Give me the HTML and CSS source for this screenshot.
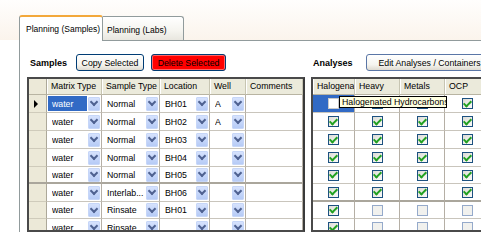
FILE: index.html
```html
<!DOCTYPE html>
<html>
<head>
<meta charset="utf-8">
<link rel="stylesheet" href="styles.css">
</head>
<body>
<div class="app">
  <div class="tabstrip">
    <div class="tab active">Planning (Samples)</div>
    <div class="tab">Planning (Labs)</div>
  </div>
  <div class="panel">
    <section class="pane samples">
      <div class="toolbar">
        <span class="label">Samples</span>
        <button class="btn btn-copy">Copy Selected</button>
        <button class="btn btn-delete">Delete Selected</button>
      </div>
      <div class="grid grid-samples">
        <div class="row head">
          <div class="rh"></div>
          <div class="h">Matrix Type</div>
          <div class="h">Sample Type</div>
          <div class="h">Location</div>
          <div class="h">Well</div>
          <div class="h">Comments</div>
        </div>
        <div class="row">
          <div class="rh cur"></div>
          <div class="c combo sel"><span class="v">water</span><span class="dd"></span></div>
          <div class="c combo"><span class="v">Normal</span><span class="dd"></span></div>
          <div class="c combo"><span class="v">BH01</span><span class="dd"></span></div>
          <div class="c combo"><span class="v">A</span><span class="dd"></span></div>
          <div class="c"></div>
        </div>
        <div class="row">
          <div class="rh"></div>
          <div class="c combo"><span class="v">water</span><span class="dd"></span></div>
          <div class="c combo"><span class="v">Normal</span><span class="dd"></span></div>
          <div class="c combo"><span class="v">BH02</span><span class="dd"></span></div>
          <div class="c combo"><span class="v">A</span><span class="dd"></span></div>
          <div class="c"></div>
        </div>
        <div class="row">
          <div class="rh"></div>
          <div class="c combo"><span class="v">water</span><span class="dd"></span></div>
          <div class="c combo"><span class="v">Normal</span><span class="dd"></span></div>
          <div class="c combo"><span class="v">BH03</span><span class="dd"></span></div>
          <div class="c combo"><span class="v"></span><span class="dd"></span></div>
          <div class="c"></div>
        </div>
        <div class="row">
          <div class="rh"></div>
          <div class="c combo"><span class="v">water</span><span class="dd"></span></div>
          <div class="c combo"><span class="v">Normal</span><span class="dd"></span></div>
          <div class="c combo"><span class="v">BH04</span><span class="dd"></span></div>
          <div class="c combo"><span class="v"></span><span class="dd"></span></div>
          <div class="c"></div>
        </div>
        <div class="row short thick">
          <div class="rh"></div>
          <div class="c combo"><span class="v">water</span><span class="dd"></span></div>
          <div class="c combo"><span class="v">Normal</span><span class="dd"></span></div>
          <div class="c combo"><span class="v">BH05</span><span class="dd"></span></div>
          <div class="c combo"><span class="v"></span><span class="dd"></span></div>
          <div class="c"></div>
        </div>
        <div class="row">
          <div class="rh"></div>
          <div class="c combo"><span class="v">water</span><span class="dd"></span></div>
          <div class="c combo"><span class="v">Interlab...</span><span class="dd"></span></div>
          <div class="c combo"><span class="v">BH06</span><span class="dd"></span></div>
          <div class="c combo"><span class="v"></span><span class="dd"></span></div>
          <div class="c"></div>
        </div>
        <div class="row short">
          <div class="rh"></div>
          <div class="c combo"><span class="v">water</span><span class="dd"></span></div>
          <div class="c combo"><span class="v">Rinsate</span><span class="dd"></span></div>
          <div class="c combo"><span class="v">BH01</span><span class="dd"></span></div>
          <div class="c combo"><span class="v"></span><span class="dd"></span></div>
          <div class="c"></div>
        </div>
        <div class="row">
          <div class="rh"></div>
          <div class="c combo"><span class="v">water</span><span class="dd"></span></div>
          <div class="c combo"><span class="v">Rinsate</span><span class="dd"></span></div>
          <div class="c combo"><span class="v"></span><span class="dd"></span></div>
          <div class="c combo"><span class="v"></span><span class="dd"></span></div>
          <div class="c"></div>
        </div>
      </div>
    </section>
    <section class="pane analyses">
      <div class="toolbar">
        <span class="label">Analyses</span>
        <button class="btn btn-edit">Edit Analyses / Containers</button>
      </div>
      <div class="grid grid-analyses">
        <div class="row head">
          <div class="h">Halogenated</div>
          <div class="h">Heavy</div>
          <div class="h">Metals</div>
          <div class="h">OCP</div>
        </div>
        <div class="row">
          <div class="c chk sel"><span class="box"></span></div>
          <div class="c chk"><span class="box on"></span></div>
          <div class="c chk"><span class="box on"></span></div>
          <div class="c chk"><span class="box on"></span></div>
        </div>
        <div class="row">
          <div class="c chk"><span class="box on"></span></div>
          <div class="c chk"><span class="box on"></span></div>
          <div class="c chk"><span class="box on"></span></div>
          <div class="c chk"><span class="box on"></span></div>
        </div>
        <div class="row">
          <div class="c chk"><span class="box on"></span></div>
          <div class="c chk"><span class="box on"></span></div>
          <div class="c chk"><span class="box on"></span></div>
          <div class="c chk"><span class="box on"></span></div>
        </div>
        <div class="row">
          <div class="c chk"><span class="box on"></span></div>
          <div class="c chk"><span class="box on"></span></div>
          <div class="c chk"><span class="box on"></span></div>
          <div class="c chk"><span class="box on"></span></div>
        </div>
        <div class="row short">
          <div class="c chk"><span class="box on"></span></div>
          <div class="c chk"><span class="box on"></span></div>
          <div class="c chk"><span class="box on"></span></div>
          <div class="c chk"><span class="box on"></span></div>
        </div>
        <div class="row thick">
          <div class="c chk"><span class="box on"></span></div>
          <div class="c chk"><span class="box on"></span></div>
          <div class="c chk"><span class="box on"></span></div>
          <div class="c chk"><span class="box on"></span></div>
        </div>
        <div class="row short">
          <div class="c chk"><span class="box on"></span></div>
          <div class="c chk"><span class="box off"></span></div>
          <div class="c chk"><span class="box off"></span></div>
          <div class="c chk"><span class="box off"></span></div>
        </div>
        <div class="row">
          <div class="c chk"><span class="box on"></span></div>
          <div class="c chk"><span class="box off"></span></div>
          <div class="c chk"><span class="box off"></span></div>
          <div class="c chk"><span class="box off"></span></div>
        </div>
        <div class="tooltip">Halogenated Hydrocarbons</div>
      </div>
    </section>
  </div>
</div>
</body>
</html>
```
FILE: styles.css
```css
* { box-sizing: border-box; }

body {
  margin: 0;
  background: #fff;
  font-family: "Liberation Sans", Arial, sans-serif;
  font-size: 8.75px;
  color: #000;
}

.app {
  width: 481px;
  height: 232px;
  overflow: hidden;
  background: linear-gradient(#fffefd, #fbf4ec 40px, #fff 40px);
}

/* tabs */
.tabstrip {
  height: 40px;
  display: flex;
  align-items: flex-end;
  padding-left: 19px;
}

.tab {
  height: 24px;
  width: 81px;
  padding: 7px 0 0 4px;
  line-height: 12px;
  font-size: 8.5px;
  white-space: nowrap;
  border: 1px solid #919b9c;
  border-left: none;
  border-bottom: none;
  border-radius: 0 3px 0 0;
  background: linear-gradient(#fff, #f5f4ef 60%, #e8e6df);
}

.tab.active {
  position: relative;
  z-index: 1;
  height: 26px;
  width: 84px;
  margin-bottom: -1px;
  padding: 6px 0 0 6px;
  border-left: 1px solid #919b9c;
  border-top: 2px solid #f3a83b;
  border-radius: 3px 3px 0 0;
  background: #fff;
}

/* panel */
.panel {
  margin-left: 19px;
  height: 192px;
  display: flex;
  gap: 6px;
  padding: 13px 0 0 7px;
  border-left: 1px solid #919b9c;
  border-top: 1px solid #919b9c;
  background: #fff;
}

.pane {
  display: flex;
  flex-direction: column;
  gap: 6px;
  flex: none;
}

.toolbar {
  height: 17px;
  display: flex;
  align-items: center;
  gap: 7px;
}

.samples .toolbar { padding-left: 3px; }
.analyses .toolbar { padding-left: 2px; gap: 11px; }

.label {
  font-weight: bold;
  font-size: 9px;
  margin-right: 2px;
}

.btn {
  height: 17px;
  padding: 0;
  font: inherit;
  color: #000;
  white-space: nowrap;
  overflow: hidden;
  border: 1px solid #003c74;
  border-radius: 3px;
  background: linear-gradient(#ffffff, #f5f4ef 65%, #dedad0);
}

.btn-copy { width: 68px; }
.btn-delete { width: 75px; background: #ff0000; box-shadow: inset 0 0 0 1px #f66; }
.btn-edit { width: 128px; border-color: #5a76a6; }

/* grids */
.grid {
  position: relative;
  border: 2px solid #4a4a4a;
  border-right-color: #3a3a3a;
  height: 160px;
  overflow: hidden;
}

.grid-samples { width: 278px; }
.grid-analyses { width: 180px; }

.row {
  display: grid;
  height: 18px;
}

.row.head { height: 16px; }
.row.short { height: 17px; }

.grid-samples .row { grid-template-columns: 18px 55px 58px 50px 36px 57px; }
.grid-analyses .row { grid-template-columns: 42px 45px 45px 45px; }

.h {
  background: #ebeadb;
  border-right: 1px solid #c7c5b2;
  border-bottom: 1px solid #b8b4a2;
  box-shadow: inset 1px 0 0 #fff;
  padding-left: 4px;
  line-height: 15px;
  white-space: nowrap;
  overflow: hidden;
}

.rh {
  background: #ece9d8;
  border-right: 1px solid #aca899;
  border-bottom: 1px solid #cfcbbb;
  display: flex;
  align-items: center;
  padding-left: 5px;
}

.head .rh { border-bottom-color: #b8b4a2; }

.rh.cur::before {
  content: "";
  border-left: 4px solid #000;
  border-top: 4px solid transparent;
  border-bottom: 4px solid transparent;
}

.c {
  background: #fff;
  border-right: 1px solid #b5afa5;
  border-bottom: 1px solid #c9c5bc;
  white-space: nowrap;
  overflow: hidden;
}

.thick .c, .thick .rh { border-bottom: 2px solid #aaa69c; }

.combo {
  display: flex;
  align-items: center;
  padding: 0 1px 0 5px;
}

.combo .v {
  flex: 1;
  overflow: hidden;
}

.combo.sel { padding: 1px 1px 1px 1px; }
.combo.sel .v {
  align-self: stretch;
  display: flex;
  align-items: center;
  padding-left: 4px;
  background: #316ac5;
  color: #fff;
  margin-right: 1px;
}

.dd {
  flex: none;
  width: 12px;
  height: 14px;
  display: flex;
  align-items: center;
  justify-content: center;
  border: 1px solid #c6d6f8;
  border-radius: 1px;
  background: linear-gradient(#d6e2fd, #b6cbf6);
}

.dd::after {
  content: "";
  width: 4px;
  height: 4px;
  margin-top: -3px;
  border-right: 2px solid #4f6291;
  border-bottom: 2px solid #4f6291;
  transform: rotate(45deg);
}

.chk {
  display: flex;
  align-items: center;
  justify-content: center;
}

.chk.sel { background: #316ac5; }

.box {
  width: 11px;
  height: 11px;
  border: 1px solid #1c5180;
  background: linear-gradient(135deg, #dcdcd6, #fbfbf9);
  display: flex;
  align-items: center;
  justify-content: center;
}

.chk.sel .box { background: #fff; border-color: #c9c9c9; }

.box.on::after {
  content: "";
  width: 3px;
  height: 6px;
  margin-top: -2px;
  border-right: 2px solid #21a121;
  border-bottom: 2px solid #21a121;
  transform: rotate(45deg);
}

.box.off {
  border-color: #95aacb;
  background: #f1f1ee;
}

.tooltip {
  position: absolute;
  left: 26px;
  top: 17px;
  width: 108px;
  height: 12px;
  padding: 0 2px;
  line-height: 10px;
  white-space: nowrap;
  overflow: hidden;
  background: #ffffe1;
  border: 1px solid #000;
  z-index: 2;
}
```
